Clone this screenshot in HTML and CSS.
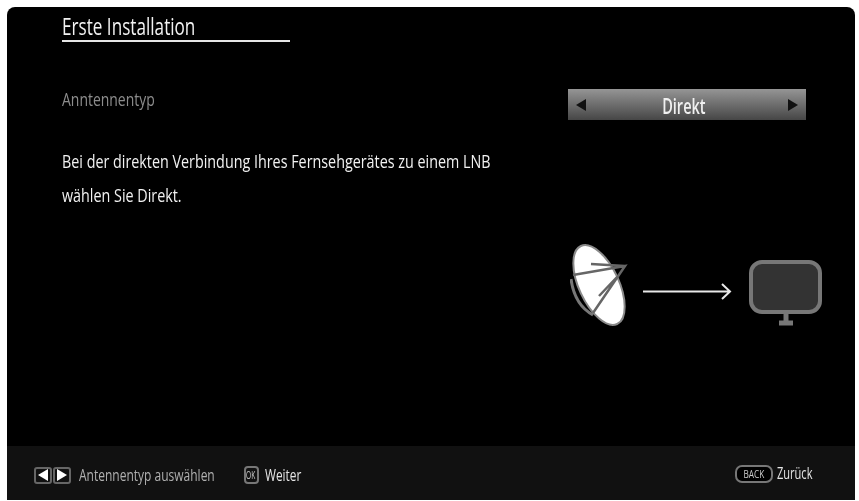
FILE: index.html
```html
<!DOCTYPE html>
<html lang="de">
<head>
    <meta charset="UTF-8">
    <title>Erste Installation</title>
    <link rel="stylesheet" href="styles.css">
</head>
<body>

    <div class="screen">
        <div class="content">
            <div class="title-row">
                <h1 class="title"><span class="narrow">Erste Installation</span></h1>
            </div>

            <div class="option-row">
                <span class="option-label"><span class="narrow">Anntennentyp</span></span>
                <div class="selector">
                    <span class="arrow arrow-left"></span>
                    <span class="selector-value"><span class="narrow">Direkt</span></span>
                    <span class="arrow arrow-right"></span>
                </div>
            </div>

            <p class="description">
                <span class="narrow">Bei der direkten Verbindung Ihres Fernsehgerätes zu einem LNB</span><br>
                <span class="narrow">wählen Sie Direkt.</span>
            </p>

            <div class="diagram">
                <!-- Schüssel -->
                <svg class="dish" width="60" height="84" viewBox="0 0 60 84">
                    <path d="M1 35 C3 50 10 64 23 71" fill="none" stroke="#777" stroke-width="3"/>
                    <ellipse cx="29" cy="41" rx="20" ry="43" transform="rotate(-25 29 41)" fill="#fff" stroke="#8a8a8a" stroke-width="2"/>
                    <path d="M3 31 L55 22 L23 69 M21 20 L55 22 M48 32 L29 52" fill="none" stroke="#666" stroke-width="2.5"/>
                </svg>
                <!-- Pfeil -->
                <svg class="signal" width="90" height="20" viewBox="0 0 90 20">
                    <path d="M0 10.5 H86 M79 3 L87 10.5 L79 18" fill="none" stroke="#e8e8e8" stroke-width="2"/>
                </svg>
                <!-- Fernseher -->
                <svg class="tv" width="74" height="66" viewBox="0 0 74 66">
                    <rect x="2" y="2" width="69" height="50" rx="11" fill="#333" stroke="#777" stroke-width="4"/>
                    <path d="M37 53 V62 M30 63 H44" fill="none" stroke="#777" stroke-width="5"/>
                </svg>
            </div>
        </div>

        <div class="footer">
            <div class="hints">
                <span class="key-arrow"><i class="tri-left"></i></span>
                <span class="key-arrow"><i class="tri-right"></i></span>
                <span class="hint-text select-text"><span class="narrow">Antennentyp auswählen</span></span>
                <span class="key key-ok"><span class="narrow">OK</span></span>
                <span class="hint-text next-text"><span class="narrow">Weiter</span></span>
            </div>
            <div class="hints">
                <span class="key key-back"><span class="narrow">BACK</span></span>
                <span class="hint-text back-text"><span class="narrow">Zurück</span></span>
            </div>
        </div>
    </div>

</body>
</html>
```

FILE: styles.css
```css
html, body {
    height: 100%;
}

body {
    margin: 0;
    background-color: #fff;
    font-family: "Open Sans", sans-serif;
    color: #fff;
    overflow: hidden;
}

.screen {
    box-sizing: border-box;
    width: 848px;
    height: 493px;
    margin: 7px 0 0 7px;
    background-color: #000;
    border-radius: 8px 8px 0 0;
    display: flex;
    flex-direction: column;
    filter: blur(0.4px);
}

.content {
    flex: 1;
    padding: 0 34px 0 55px;
}

/* Die Schrift im Original ist schmal, daher gestaucht */
.narrow {
    display: inline-block;
    white-space: nowrap;
    transform-origin: left center;
}

.title-row {
    width: 228px;
    height: 33px;
    border-bottom: 2px solid #e6e6e6;
}

.title {
    margin: 0;
    padding-top: 6px;
    font-size: 23px;
    line-height: 26px;
    font-weight: normal;
    color: #f2f2f2;
}

.title .narrow {
    transform: scaleX(0.745);
}

.option-row {
    display: flex;
    justify-content: space-between;
    margin-top: 47px;
}

.option-label {
    margin-top: -2px;
    font-size: 18px;
    line-height: 24px;
    color: #8c8c8c;
}

.option-label .narrow {
    transform: scaleX(0.775);
}

.selector {
    box-sizing: border-box;
    width: 238px;
    height: 31px;
    margin-right: 15px;
    padding: 0 8px;
    display: flex;
    align-items: center;
    background: linear-gradient(#959595, #464646);
}

.selector-value {
    flex: 1;
    padding-right: 6px;
    text-align: center;
    font-size: 22px;
    font-weight: 600;
    line-height: 28px;
    color: #f0f0f0;
}

.selector-value .narrow {
    transform: scaleX(0.66);
    transform-origin: center;
}

.arrow {
    width: 0;
    height: 0;
    border-top: 6px solid transparent;
    border-bottom: 6px solid transparent;
}

.arrow-left {
    border-right: 10px solid #111;
}

.arrow-right {
    border-left: 10px solid #111;
}

.description {
    margin: 24px 0 0;
    font-size: 18px;
    line-height: 34px;
    color: #f2f2f2;
}

.description .narrow {
    transform: scaleX(0.796);
}

.diagram {
    display: flex;
    align-items: flex-start;
    justify-content: flex-end;
    margin: 32px -2px 0 0;
}

.signal {
    margin: 37px 16px 0 13px;
}

.tv {
    margin-top: 16px;
}

.footer {
    box-sizing: border-box;
    height: 54px;
    padding: 4px 41px 0 27px;
    background-color: #111;
    display: flex;
    justify-content: space-between;
    align-items: center;
}

.hints {
    display: flex;
    align-items: center;
}

.key-arrow {
    box-sizing: border-box;
    width: 18px;
    height: 17px;
    margin-right: 1px;
    border: 2px solid #666;
    border-radius: 3px;
    display: flex;
    align-items: center;
    justify-content: center;
}

.tri-left, .tri-right {
    width: 0;
    height: 0;
    border-top: 6px solid transparent;
    border-bottom: 6px solid transparent;
}

.tri-left {
    border-right: 10px solid #fff;
}

.tri-right {
    border-left: 10px solid #fff;
}

.hint-text {
    font-size: 16px;
    line-height: 20px;
    color: #e6e6e6;
}

.select-text {
    width: 136px;
    margin-left: 7px;
    color: #b0b0b0;
}

.select-text .narrow {
    transform: scaleX(0.75);
}

.next-text {
    width: 37px;
    margin-left: 6px;
    font-weight: 500;
}

.next-text .narrow {
    transform: scaleX(0.74);
}

.key {
    box-sizing: border-box;
    height: 18px;
    border: 2px solid #777;
    border-radius: 4px;
    font-size: 11px;
    line-height: 14px;
    text-align: center;
    color: #ccc;
}

.key .narrow {
    transform: scaleX(0.75);
    transform-origin: center;
}

.key-ok {
    width: 15px;
    margin-left: 29px;
    overflow: hidden;
}

.key-ok .narrow {
    transform: scaleX(0.6);
    margin-left: -3px;
}

.key-back {
    width: 38px;
    margin: -3px 4px 0 0;
    border-radius: 7px;
    background-color: #000;
}

.back-text {
    width: 37px;
    margin-top: -5px;
    font-weight: 500;
}

.back-text .narrow {
    transform: scaleX(0.69);
}
```
